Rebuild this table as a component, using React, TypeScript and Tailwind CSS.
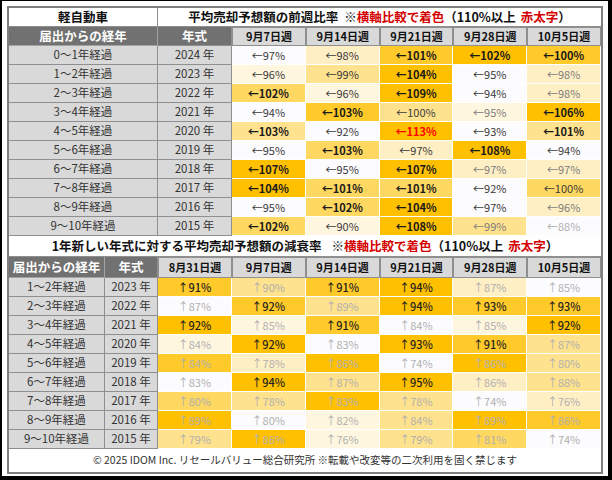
type Tone = "b" | "n" | "g" | "l" | "r" | "k";
type Shade = "w" | "c1" | "c2" | "y1" | "y2" | "y3" | "g";
type Cell = [number, Shade, Tone];
type Row = { label: string; year: string; cells: Cell[] };

const SHADE: Record<Shade, string> = {
  w: "bg-[#fcfbfe]",
  c1: "bg-[#fff6df]",
  c2: "bg-[#ffefc5]",
  y1: "bg-[#ffe28e]",
  y2: "bg-[#ffd861]",
  y3: "bg-[#ffca2a]",
  g: "bg-[#ffc000]",
};

const TONE: Record<Tone, string> = {
  b: "font-bold text-[#1a1a1a]",
  n: "text-[#3a3a3a]",
  g: "text-[#7d7d7d]",
  l: "text-[#b0b0b0]",
  r: "font-bold text-[#ff0000]",
  k: "font-medium text-[#1f1f1f]",
};

const TOP_WEEKS = ["9月7日週", "9月14日週", "9月21日週", "9月28日週", "10月5日週"];
const BOTTOM_WEEKS = ["8月31日週", ...TOP_WEEKS];

const topRows: Row[] = [
  { label: "0〜1年経過", year: "2024 年", cells: [[97, "w", "n"], [98, "c2", "n"], [101, "y3", "b"], [102, "g", "b"], [100, "y3", "b"]] },
  { label: "1〜2年経過", year: "2023 年", cells: [[96, "c1", "n"], [99, "y1", "n"], [104, "g", "b"], [95, "w", "n"], [98, "c2", "g"]] },
  { label: "2〜3年経過", year: "2022 年", cells: [[102, "y2", "b"], [96, "c1", "n"], [109, "g", "b"], [94, "w", "n"], [98, "c2", "g"]] },
  { label: "3〜4年経過", year: "2021 年", cells: [[94, "w", "n"], [103, "y3", "b"], [100, "y1", "n"], [95, "c1", "g"], [106, "g", "b"]] },
  { label: "4〜5年経過", year: "2020 年", cells: [[103, "y1", "b"], [92, "w", "n"], [113, "g", "r"], [93, "w", "n"], [101, "y1", "b"]] },
  { label: "5〜6年経過", year: "2019 年", cells: [[95, "w", "n"], [103, "y2", "b"], [97, "c2", "n"], [108, "g", "b"], [94, "w", "n"]] },
  { label: "6〜7年経過", year: "2018 年", cells: [[107, "g", "b"], [95, "w", "n"], [107, "g", "b"], [97, "c2", "g"], [97, "c2", "g"]] },
  { label: "7〜8年経過", year: "2017 年", cells: [[104, "g", "b"], [101, "y2", "b"], [101, "y2", "b"], [92, "w", "n"], [100, "y2", "n"]] },
  { label: "8〜9年経過", year: "2016 年", cells: [[95, "w", "n"], [102, "y2", "b"], [104, "g", "b"], [97, "w", "n"], [96, "c2", "g"]] },
  { label: "9〜10年経過", year: "2015 年", cells: [[102, "y2", "b"], [90, "c1", "n"], [108, "g", "b"], [99, "y1", "g"], [88, "w", "l"]] },
];

const bottomRows: Row[] = [
  { label: "1〜2年経過", year: "2023 年", cells: [[91, "y3", "k"], [90, "y1", "l"], [91, "y3", "k"], [94, "g", "k"], [87, "c2", "l"], [85, "w", "l"]] },
  { label: "2〜3年経過", year: "2022 年", cells: [[87, "w", "l"], [92, "y3", "k"], [89, "y1", "l"], [94, "g", "k"], [93, "y3", "k"], [93, "y3", "k"]] },
  { label: "3〜4年経過", year: "2021 年", cells: [[92, "g", "k"], [85, "c1", "l"], [91, "y3", "k"], [84, "w", "l"], [85, "c1", "l"], [92, "g", "k"]] },
  { label: "4〜5年経過", year: "2020 年", cells: [[84, "c1", "l"], [92, "g", "k"], [83, "w", "l"], [93, "g", "k"], [91, "y3", "k"], [87, "y1", "l"]] },
  { label: "5〜6年経過", year: "2019 年", cells: [[84, "y3", "l"], [78, "c2", "l"], [86, "g", "l"], [74, "w", "l"], [86, "g", "l"], [80, "y1", "l"]] },
  { label: "6〜7年経過", year: "2018 年", cells: [[83, "w", "l"], [94, "g", "k"], [87, "y1", "l"], [95, "g", "k"], [86, "c2", "l"], [88, "y1", "l"]] },
  { label: "7〜8年経過", year: "2017 年", cells: [[80, "y2", "l"], [78, "y1", "l"], [83, "g", "l"], [78, "y1", "l"], [74, "w", "l"], [76, "c2", "l"]] },
  { label: "8〜9年経過", year: "2016 年", cells: [[89, "g", "l"], [80, "w", "l"], [82, "c1", "l"], [84, "y1", "l"], [89, "g", "l"], [86, "y3", "l"]] },
  { label: "9〜10年経過", year: "2015 年", cells: [[79, "y1", "l"], [86, "g", "l"], [76, "c1", "l"], [79, "y1", "l"], [81, "y2", "l"], [74, "w", "l"]] },
];

// 注記: 赤字部分だけ色を変える
function Note({ gap }: { gap: string }) {
  return (
    <>
      <span className={gap}>※</span>
      <span className="text-[#d40000]">横軸比較で着色</span>
      <span>（110%以上</span>
      <span className="ml-[5px] text-[#d40000]">赤太字</span>
      <span>）</span>
    </>
  );
}

function HeaderCells({ weeks }: { weeks: string[] }) {
  return (
    <>
      <div className="flex items-center justify-center border-r border-b border-[#a3a3a3] bg-[#717171] text-[12.5px] font-bold text-white">
        届出からの経年
      </div>
      <div className="flex items-center justify-center border-r border-b border-[#8f8f8f] bg-[#717171] text-[12.5px] font-bold text-white">
        年式
      </div>
      {weeks.map((w) => (
        <div
          key={w}
          className="flex items-center justify-center border border-[#8f8f8f] bg-[#d9d9d9] text-[11px] font-bold text-[#111]"
        >
          {w}
        </div>
      ))}
    </>
  );
}

function BodyRow({ row, arrow }: { row: Row; arrow: string }) {
  return (
    <>
      <div className="flex items-center justify-center border-r border-b border-[#8f8f8f] bg-[#d9d9d9] text-[11.5px] text-[#333]">
        {row.label}
      </div>
      <div className="flex items-center justify-center border-r border-b border-[#8f8f8f] bg-[#d9d9d9] text-[11.5px] text-[#333]">
        {row.year}
      </div>
      {row.cells.map(([v, shade, tone], i) => (
        <div
          key={i}
          className={`flex items-center justify-center border-r border-b border-white text-[11px] ${SHADE[shade]} ${TONE[tone]}`}
        >
          {arrow}
          {v}%
        </div>
      ))}
    </>
  );
}

export default function App() {
  return (
    <div className="h-[480px] w-[612px] border-t border-r-4 border-b-4 border-l-2 border-black bg-white px-[5px] pt-[5px] pb-[2px] font-['Noto_Sans_CJK_JP',sans-serif] leading-none">
      <div className="flex h-full flex-col border-2 border-[#7f7f7f]">
        <div className="grid grid-cols-[149px_74px_repeat(5,minmax(0,1fr))] grid-rows-[19px_19px_repeat(10,19px)]">
          <div className="flex items-center justify-center border-r border-b border-[#8f8f8f] bg-white text-[12.5px] font-bold text-[#111]">
            軽自動車
          </div>
          <div className="col-span-6 flex items-center justify-center border-b border-[#8f8f8f] bg-white text-[12.5px] font-bold text-[#111]">
            平均売却予想額の前週比率
            <Note gap="ml-[6px]" />
          </div>
          <HeaderCells weeks={TOP_WEEKS} />
          {topRows.map((r) => (
            <BodyRow key={r.label} row={r} arrow="←" />
          ))}
        </div>
        <div className="grid grid-cols-[96px_53px_repeat(6,minmax(0,1fr))] grid-rows-[21px_21px_repeat(9,19px)]">
          <div className="col-span-8 flex items-center justify-center border-b border-[#8f8f8f] bg-white text-[12.5px] font-bold text-[#111]">
            1年新しい年式に対する平均売却予想額の減衰率
            <Note gap="ml-[10px]" />
          </div>
          <HeaderCells weeks={BOTTOM_WEEKS} />
          {bottomRows.map((r) => (
            <BodyRow key={r.label} row={r} arrow="↑" />
          ))}
        </div>
        <div className="flex flex-1 items-center justify-center bg-white text-[10.5px] text-[#333]">
          © 2025 IDOM Inc. リセールバリュー総合研究所 ※転載や改変等の二次利用を固く禁じます
        </div>
      </div>
    </div>
  );
}
